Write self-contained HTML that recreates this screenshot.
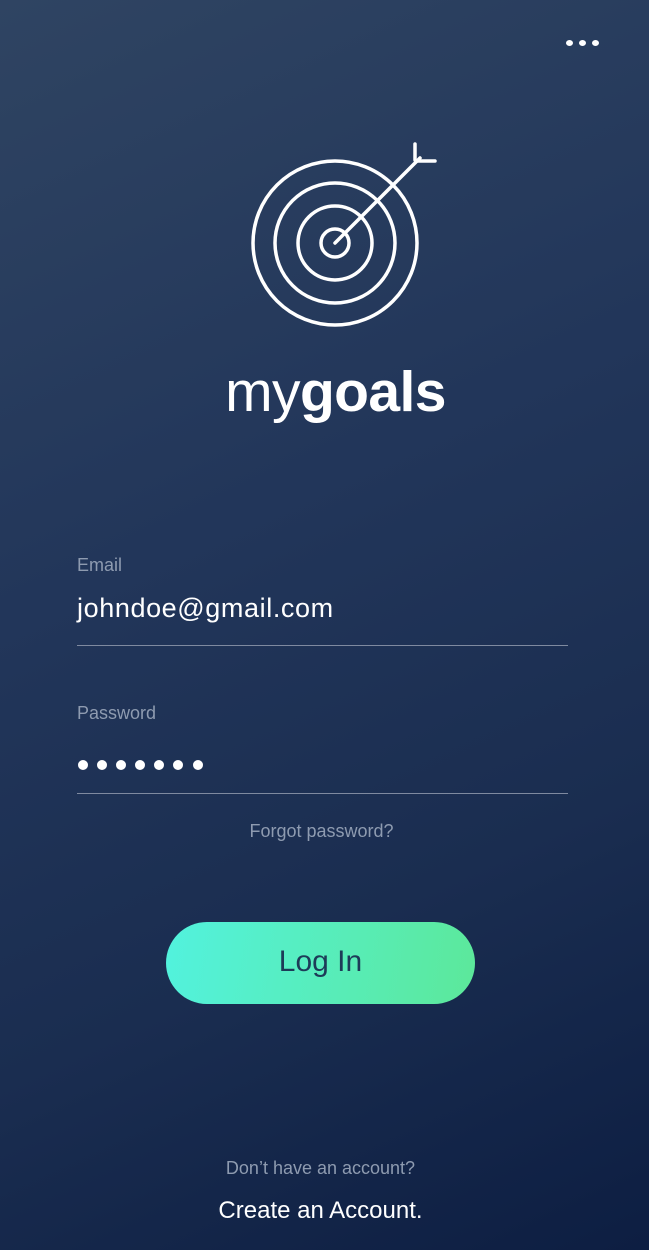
<!DOCTYPE html>
<html><head><meta charset="utf-8"><style>
html,body{margin:0;padding:0}
body{width:649px;height:1250px;position:relative;overflow:hidden;
background:linear-gradient(155deg,#2f4462 0%,#22365a 40%,#1a2d50 70%,#0d1e42 100%);
font-family:"Liberation Sans",sans-serif;color:#fff}
.abs{position:absolute}
.label{color:#8e9bb0;font-size:18px}
.line{position:absolute;left:77px;width:491px;height:1px;background:#7f8aa0}
.dot{position:absolute;width:7px;height:6px;border-radius:50%;background:#fff;top:40px}
.pd{position:absolute;width:10px;height:10px;border-radius:50%;background:#fff;top:760px}
</style></head><body>
<div class="dot" style="left:566px"></div><div class="dot" style="left:579px"></div><div class="dot" style="left:592px"></div>
<svg class="abs" style="left:0;top:0" width="649" height="450" fill="none" stroke="#fff" stroke-width="3.5">
<circle cx="335" cy="243" r="82"/>
<circle cx="335" cy="243" r="60"/>
<circle cx="335" cy="243" r="37"/>
<circle cx="335" cy="243" r="14"/>
<path d="M335 243 L420 158" stroke-linecap="round"/>
<path d="M415 144 V160 M417 161 H435" stroke-linecap="round"/>
</svg>
<div class="abs" style="left:0;width:671px;top:359px;text-align:center;font-size:57px;letter-spacing:-0.6px">my<b>goals</b></div>
<div class="abs label" style="left:77px;top:555px">Email</div>
<div class="abs" style="left:77px;top:593px;font-size:27px;letter-spacing:0.6px">johndoe@gmail.com</div>
<div class="line" style="top:645px"></div>
<div class="abs label" style="left:77px;top:703px">Password</div>
<div class="pd" style="left:78px"></div><div class="pd" style="left:97px"></div><div class="pd" style="left:116px"></div><div class="pd" style="left:135px"></div><div class="pd" style="left:154px"></div><div class="pd" style="left:173px"></div><div class="pd" style="left:193px"></div>
<div class="line" style="top:793px"></div>
<div class="abs label" style="left:0;width:643px;text-align:center;top:821px">Forgot password?</div>
<div class="abs" style="left:166px;top:922px;width:309px;height:82px;border-radius:41px;background:linear-gradient(100deg,#52f2de,#5ce89a);color:#1d3b58;font-size:30px;text-align:center;line-height:80px">Log In</div>
<div class="abs label" style="left:0;width:641px;text-align:center;top:1158px">Don’t have an account?</div>
<div class="abs" style="left:0;width:641px;text-align:center;top:1197px;font-size:24px">Create an Account.</div>
</body></html>
